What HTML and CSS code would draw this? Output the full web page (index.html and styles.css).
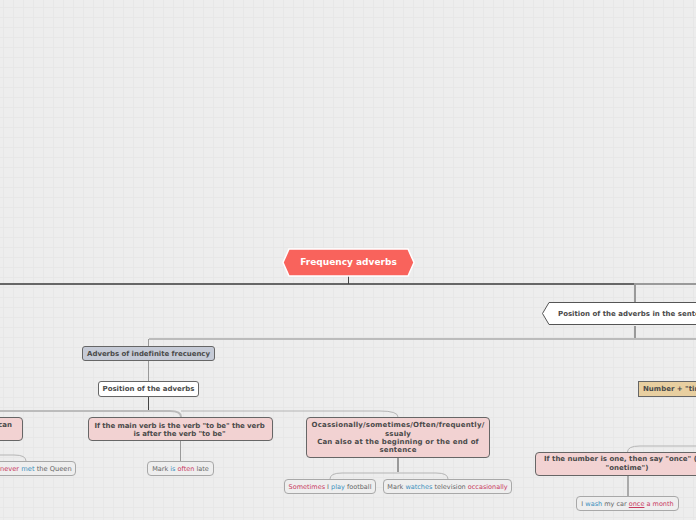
FILE: index.html
```html
<!DOCTYPE html>
<html lang="en">
<head>
<meta charset="utf-8">
<title>Frequency adverbs</title>
<link rel="stylesheet" href="styles.css">
</head>
<body>
<main class="canvas">
  <svg class="links" width="696" height="520" viewBox="0 0 696 520" fill="none" aria-hidden="true">
    <path class="l-main" d="M0 284H634"/>
    <path class="l-mid" d="M634 284H696"/>
    <path class="l-dark-thin" d="M348.500 276V284"/>
    <path class="l-mid" d="M635 284V302M635 326V339"/>
    <path class="l-light" d="M149 339H696"/>
    <path class="l-thin" d="M148.500 339V346M148.500 361V381"/>
    <path class="l-dark-thin" d="M148.500 397V411"/>
    <path class="l-light" d="M0 411H170Q181 411 181 417"/>
    <path class="l-light-thin" d="M181 411H380Q398 411 398 417"/>
    <path class="l-thin" d="M180.500 441V461"/>
    <path class="l-light-thin" d="M0 455H14Q26 455 26 461"/>
    <path class="l-mid" d="M398 458V472"/>
    <path class="l-light-thin" d="M330 479Q330 473 342 473H436Q448 473 448 479"/>
    <path class="l-light-thin" d="M627.500 452Q627.500 446 640 446H696"/>
    <path class="l-soft" d="M628 476V497"/>
    <path class="l-hex-root" d="M289 249H408L414 262.500 408 276H289L283 262.500Z"/>
    <path class="l-hex-side" d="M549 302.500H700V324.500H549L542.500 313.500Z"/>
  </svg>

  <div class="root"><p>Frequency adverbs</p></div>
  <div class="side"><p>Position of the adverbs in the sentence</p></div>

  <div class="node blue n-indef"><p>Adverbs of indefinite frecuency</p></div>
  <div class="node white n-pos"><p>Position of the adverbs</p></div>
  <div class="node tan n-num"><p>Number + "time" expressions</p></div>

  <div class="node pink n-can"><p>can</p></div>
  <div class="node pink n-main"><p>If the main verb is the verb "to be" the verb<br>is after the verb "to be"</p></div>
  <div class="node pink n-occ"><p>Ocassionally/sometimes/Often/frequently/<br>ssualy<br>Can also at the beginning or the end of<br>sentence</p></div>
  <div class="node pink n-once"><p>If the number is one, then say "once" (not<br>"onetime")</p></div>

  <div class="leaf n-never"><p>I have <span class="red">never</span> <span class="blu">met</span> the Queen</p></div>
  <div class="leaf n-mark"><p>Mark <span class="blu">is</span> <span class="red">often</span> late</p></div>
  <div class="leaf n-some"><p><span class="red">Sometimes</span> I <span class="blu">play</span> football</p></div>
  <div class="leaf n-watch"><p>Mark <span class="blu">watches</span> television <span class="red">occasionally</span></p></div>
  <div class="leaf n-wash"><p>I <span class="blu">wash</span> my car <span class="red und">once</span> <span class="red">a month</span></p></div>
</main>
</body>
</html>
```
FILE: styles.css
```css
* { box-sizing: border-box; }
html, body { margin: 0; padding: 0; }
body { width: 696px; height: 520px; overflow: hidden; background: #ededed; }
p { margin: 0; }

.canvas {
  position: relative;
  width: 696px;
  height: 520px;
  overflow: hidden;
  font-family: "DejaVu Sans", sans-serif;
  background-color: #ededed;
  background-image:
    linear-gradient(to right, #e7e7e7 1px, transparent 1px),
    linear-gradient(to bottom, #e7e7e7 1px, transparent 1px);
  background-size: 10px 10px;
  background-position: 3px 7px;
}

.links { position: absolute; left: 0; top: 0; }
.l-main { stroke: #666; stroke-width: 2; }
.l-mid { stroke: #999; stroke-width: 2; }
.l-soft { stroke: #aaa; stroke-width: 2; }
.l-thin { stroke: #999; stroke-width: 1; }
.l-dark-thin { stroke: #444; stroke-width: 1; }
.l-light { stroke: #bbb; stroke-width: 2; }
.l-light-thin { stroke: #b5b5b5; stroke-width: 1; }
.l-hex-root { fill: #f9635c; stroke: #fff; stroke-width: 1.5; }
.l-hex-side { fill: #fff; stroke: #555; stroke-width: 1; }

.root, .side, .node, .leaf {
  position: absolute;
  display: flex;
  align-items: center;
  justify-content: center;
  text-align: center;
}

.root {
  left: 283px; top: 248px; width: 131px; height: 27px;
  color: #fff; font-size: 9px; font-weight: 700;
}
.side {
  left: 558px; top: 302px; height: 23px;
  white-space: nowrap;
  color: #4a4a4a; font-size: 7px; font-weight: 700;
}

.node {
  border: 1px solid #666;
  border-radius: 3px;
  color: #4a4a4a;
  font-size: 7px;
  font-weight: 700;
  line-height: 8px;
  white-space: nowrap;
}
.blue { background: #c5cad6; }
.white { background: #fff; }
.tan { background: #e8cfa0; border-radius: 0; justify-content: flex-start; padding-left: 4px; }
.pink { background: #f2d2d2; border-radius: 4px; }

.n-indef { left: 82px; top: 346px; width: 133px; height: 15px; letter-spacing: -0.05px; }
.n-pos { left: 98px; top: 381px; width: 101px; height: 16px; }
.n-num { left: 638px; top: 381px; width: 140px; height: 16px; }
.n-can { left: -60px; top: 417px; width: 83px; height: 24px; justify-content: flex-end; align-items: flex-start; padding: 3px 10px 0 0; }
.n-main { left: 88px; top: 417px; width: 185px; height: 24px; padding: 1px 2px 0 0; letter-spacing: -0.08px; }
.n-occ { left: 306px; top: 417px; width: 184px; height: 41px; padding-top: 1px; line-height: 8.4px; letter-spacing: 0.17px; }
.n-once { left: 535px; top: 452px; width: 184px; height: 24px; line-height: 9px; }

.leaf {
  height: 15px;
  border: 1px solid #a8a8a8;
  border-radius: 4px;
  background: #eee;
  color: #666;
  font-size: 6.5px;
  white-space: nowrap;
}
.red { color: #c93a5e; }
.blu { color: #3a8fbd; }
.und { text-decoration: underline; }

.n-never { left: -30px; top: 461px; width: 106px; padding-left: 3px; font-size: 6.7px; }
.n-mark { left: 147px; top: 461px; width: 67px; }
.n-some { left: 284px; top: 479px; width: 92px; }
.n-watch { left: 383px; top: 479px; width: 129px; }
.n-wash { left: 576px; top: 496px; width: 103px; }
```
